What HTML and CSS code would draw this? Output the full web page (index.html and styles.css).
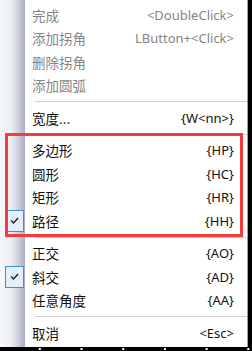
FILE: index.html
```html
<!DOCTYPE html>
<html lang="zh-CN">
<head>
    <meta charset="UTF-8">
    <title>菜单</title>
    <link rel="stylesheet" href="styles.css">
</head>
<body>
    <div class="screen">
        <div class="menu">
            <div class="item disabled"><span class="gut"></span><span class="label">完成</span><span class="key">&lt;DoubleClick&gt;</span></div>
            <div class="item disabled"><span class="gut"></span><span class="label">添加拐角</span><span class="key">LButton+&lt;Click&gt;</span></div>
            <div class="item disabled"><span class="gut"></span><span class="label">删除拐角</span><span class="key"></span></div>
            <div class="item disabled"><span class="gut"></span><span class="label">添加圆弧</span><span class="key"></span></div>
            <div class="sep"></div>
            <div class="item"><span class="gut"></span><span class="label">宽度...</span><span class="key">{W&lt;nn&gt;}</span></div>
            <div class="sep"></div>
            <div class="item"><span class="gut"></span><span class="label">多边形</span><span class="key">{HP}</span></div>
            <div class="item"><span class="gut"></span><span class="label">圆形</span><span class="key">{HC}</span></div>
            <div class="item"><span class="gut"></span><span class="label">矩形</span><span class="key">{HR}</span></div>
            <div class="item"><span class="gut"><span class="check">
                <svg width="9" height="7" viewBox="0 0 9 7"><path d="M1 3.5 L3.5 6 L8 1" fill="none" stroke="#1e1e1e" stroke-width="1.4"/></svg>
            </span></span><span class="label">路径</span><span class="key">{HH}</span></div>
            <div class="sep"></div>
            <div class="item"><span class="gut"></span><span class="label">正交</span><span class="key">{AO}</span></div>
            <div class="item"><span class="gut"><span class="check">
                <svg width="9" height="7" viewBox="0 0 9 7"><path d="M1 3.5 L3.5 6 L8 1" fill="none" stroke="#1e1e1e" stroke-width="1.4"/></svg>
            </span></span><span class="label">斜交</span><span class="key">{AD}</span></div>
            <div class="item"><span class="gut"></span><span class="label">任意角度</span><span class="key">{AA}</span></div>
            <div class="sep"></div>
            <div class="item"><span class="gut"></span><span class="label">取消</span><span class="key">&lt;Esc&gt;</span></div>

            <!-- annotation box drawn over the menu -->
            <div class="highlight"></div>
        </div>
        <div class="taskbar"></div>
    </div>
</body>
</html>
```

FILE: styles.css
```css
body {
    margin: 0;
    background: #000;
    font-family: "Noto Sans", "Noto Sans CJK SC", sans-serif;
    font-size: 13px;
}
.screen { width: 252px; height: 351px; overflow: hidden; }

.menu {
    position: relative;
    width: 248px;
    height: 347px;
    box-sizing: border-box;
    padding-top: 3px;
    border-right: 1px solid #a0a0a0;
    background-color: #fff;
    background-image: linear-gradient(to right, #f8f9fd 0%, #eceef5 45%, #c4c7d8 80%, #a9acc2 100%);
    background-size: 25px 100%;
    background-repeat: no-repeat;
}

.item {
    display: grid;
    grid-template-columns: 32px 1fr auto;
    align-items: center;
    height: 23.5px;
    padding-right: 13px;
    color: #111;
}
.item.disabled { color: #858585; }

.gut { display: flex; align-items: center; height: 100%; }
.check {
    display: flex;
    align-items: center;
    justify-content: center;
    width: 17px;
    height: 20px;
    margin-left: 5px;
    border: 1px solid #3b8fdf;
    background: #e3effb;
}

.label { font-family: "Noto Sans CJK SC", sans-serif; font-size: 13.5px; }
.key { text-align: right; }

.sep {
    height: 1px;
    margin: 4px 0 4px 35px;
    background: #cfcfcf;
}

.highlight {
    position: absolute;
    left: 5px;
    top: 133px;
    width: 238px;
    height: 104px;
    border: 3px solid #f53b3b;
    box-sizing: border-box;
}

.taskbar {
    height: 4px;
    background: #000 radial-gradient(circle, #fff 0.8px, transparent 1px) 19px 0 / 41.7px 4px repeat-x;
}
```
